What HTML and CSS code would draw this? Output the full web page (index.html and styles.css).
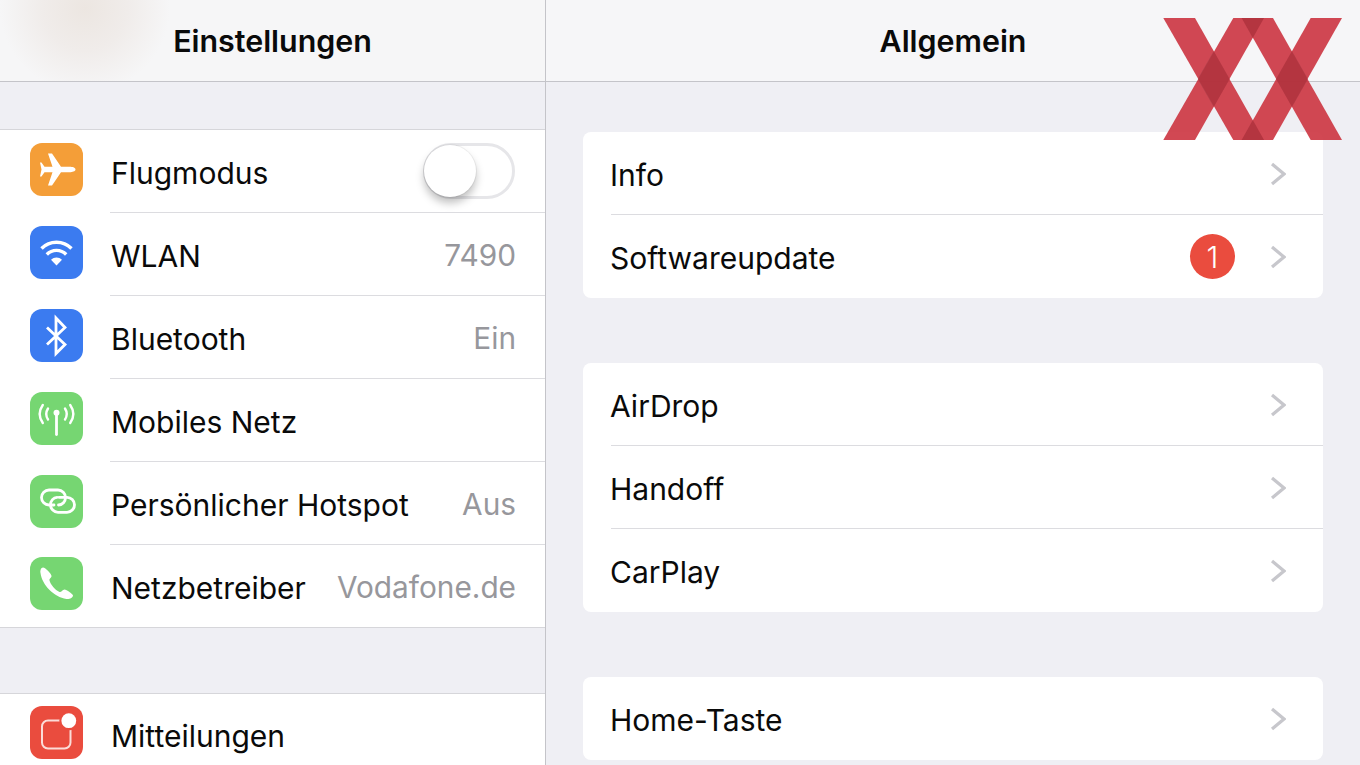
FILE: index.html
```html
<!DOCTYPE html>
<html lang="de">
<head>
<meta charset="utf-8">
<title>Einstellungen</title>
<link rel="stylesheet" href="styles.css">
</head>
<body>
<div class="app">
  <aside class="master">
    <header class="nav nav-master"><h1>Einstellungen</h1></header>
    <ul class="group group-first">
      <li class="mrow"><svg class="ico orange" viewBox="0 0 53 53"><path fill="#fff" d="M45.5 26.5C45.5 24.5 42 23.8 40 23.8L31 23.8L22 10.5L18 10.5L22.5 23.8L14.5 23.8L11.5 19.5L10 19.5L11.5 26.5L10 33.5L11.5 33.5L14.5 29.2L22.5 29.2L18 42.5L22 42.5L31 29.2L40 29.2C42 29.2 45.5 28.5 45.5 26.5Z"/></svg>
        <div class="mbody"><span class="label">Flugmodus</span><span class="toggle"><span class="knob"></span></span></div></li>
      <li class="mrow"><svg class="ico blue" viewBox="0 0 53 53"><g fill="none" stroke="#fff" stroke-width="3.4"><path d="M11.5 22.5A21 21 0 0 1 41.5 22.5"/><path d="M16.8 28.5A13.5 13.5 0 0 1 36.2 28.5"/></g><path fill="#fff" d="M26.5 39.5L21 33.8A8 8 0 0 1 32 33.8Z"/></svg>
        <div class="mbody"><span class="label">WLAN</span><span class="value">7490</span></div></li>
      <li class="mrow"><svg class="ico blue" viewBox="0 0 53 53"><path fill="none" stroke="#fff" stroke-width="2.8" d="M17 18.5L35 35.5L26 44.5V9L35 18.5L17 35.5"/></svg>
        <div class="mbody"><span class="label">Bluetooth</span><span class="value">Ein</span></div></li>
      <li class="mrow"><svg class="ico green" viewBox="0 0 53 53"><g fill="none" stroke="#fff" stroke-width="2.4" stroke-linecap="round"><path d="M26.5 21V42.5" stroke-width="2.8"/><path d="M12.8 13Q6.5 22 12.8 31"/><path d="M40.2 13Q46.5 22 40.2 31"/><path d="M18 16.5Q14.5 22 18 27.5"/><path d="M35 16.5Q38.5 22 35 27.5"/></g><circle cx="26.5" cy="20.7" r="3" fill="#fff"/></svg>
        <div class="mbody"><span class="label">Mobiles Netz</span></div></li>
      <li class="mrow"><svg class="ico green" viewBox="0 0 53 53"><g fill="none" stroke="#fff" stroke-width="2.8" stroke-linecap="round"><path d="M24 30H19A7.5 7.5 0 0 1 19 15H28A7.5 7.5 0 0 1 35.5 22.5C35.5 26.5 32.5 30 28.5 30"/><path d="M29 22.3H37A7.5 7.5 0 0 1 37 37.3H28A7.5 7.5 0 0 1 20.5 29.8C20.5 25.8 23.5 22.3 27 22.3"/></g></svg>
        <div class="mbody"><span class="label">Persönlicher Hotspot</span><span class="value">Aus</span></div></li>
      <li class="mrow"><svg class="ico green" viewBox="0 0 53 53"><path fill="#fff" d="M13 10.5C11 10.5 10 13.5 10.5 16C12 28 24 40 36.5 42C39.5 42.5 43 40.5 43 38.5C43 37 36.5 32.5 34.5 32.5C32.5 32.5 31.5 35.5 29.5 35C25 33 20.5 27.5 19.5 23.5C19 21.5 21.5 21 21.5 19C21.5 17 15.5 10.5 13 10.5Z"/></svg>
        <div class="mbody"><span class="label">Netzbetreiber</span><span class="value">Vodafone.de</span></div></li>
    </ul>
    <ul class="group group-next">
      <li class="mrow"><svg class="ico red" viewBox="0 0 53 53"><rect x="12" y="14.5" width="28.5" height="28" rx="6" fill="none" stroke="#fbdcd8" stroke-width="2"/><circle cx="38.8" cy="14.7" r="9.5" fill="#ea4c3e"/><circle cx="38.8" cy="14.7" r="7.4" fill="#fff"/></svg>
        <div class="mbody"><span class="label">Mitteilungen</span></div></li>
    </ul>
  </aside>
  <main class="detail">
    <header class="nav"><h1>Allgemein</h1></header>
    <div class="cards">
      <ul class="card">
        <li class="drow"><span class="label">Info</span><svg class="chev" viewBox="0 0 16 24"><path d="M2 2L14 12L2 22"/></svg></li>
        <li class="drow"><span class="label">Softwareupdate</span><span class="badge">1</span><svg class="chev" viewBox="0 0 16 24"><path d="M2 2L14 12L2 22"/></svg></li>
      </ul>
      <ul class="card">
        <li class="drow"><span class="label">AirDrop</span><svg class="chev" viewBox="0 0 16 24"><path d="M2 2L14 12L2 22"/></svg></li>
        <li class="drow"><span class="label">Handoff</span><svg class="chev" viewBox="0 0 16 24"><path d="M2 2L14 12L2 22"/></svg></li>
        <li class="drow"><span class="label">CarPlay</span><svg class="chev" viewBox="0 0 16 24"><path d="M2 2L14 12L2 22"/></svg></li>
      </ul>
      <ul class="card">
        <li class="drow"><span class="label">Home-Taste</span><svg class="chev" viewBox="0 0 16 24"><path d="M2 2L14 12L2 22"/></svg></li>
      </ul>
    </div>
  </main>
</div>
<svg class="mark" viewBox="0 0 180 122" aria-hidden="true">
  <g class="bars">
    <polygon points="0.3,0 32,0 101,122 70.3,122"/>
    <polygon points="70.3,0 101,0 32,122 0.3,122"/>
    <polygon points="78.7,0 110,0 179,122 147.7,122"/>
    <polygon points="147.7,0 179,0 110,122 78.7,122"/>
  </g>
  <g class="cross">
    <polygon points="50.7,33 66.7,61 50.7,89 34.7,61"/>
    <polygon points="129,33 145,61 129,89 113,61"/>
    <polygon points="78.7,0 101,0 89.8,20"/>
    <polygon points="78.7,122 101,122 89.8,102"/>
  </g>
</svg>
</body>
</html>
```
FILE: styles.css
```css
* { box-sizing: border-box; }
html, body { margin: 0; height: 765px; overflow: hidden; }
body { font-family: Inter, "Liberation Sans", sans-serif; background: #efeff4; color: #0a0a0a; }
ul { list-style: none; margin: 0; padding: 0; }
.app { display: flex; height: 765px; overflow: hidden; }
.master { width: 546px; flex: none; border-right: 1px solid #c4c4c9; }
.detail { flex: 1; min-width: 0; }
.nav { height: 82px; padding-top: 2px; border-bottom: 1px solid #c4c4c9; background: #f6f6f8; display: flex; align-items: center; justify-content: center; }
.nav-master { background: radial-gradient(ellipse 85px 85px at 85px 8px, #ece6e1 0%, #f0ecea 50%, #f6f6f7 100%), #f6f6f7; }
.nav h1 { margin: 0; font-size: 30.4px; font-weight: 600; line-height: 1; }
.group { background: #fff; border-top: 1px solid #d6d6da; border-bottom: 1px solid #d6d6da; }
.group-first { margin-top: 47px; }
.group-next { margin-top: 65px; border-bottom: 0; }
.mrow { display: flex; height: 83px; padding-left: 29.5px; align-items: center; }
.mrow:last-child { height: 82px; }
.ico { width: 53px; height: 53px; flex: none; border-radius: 12px; margin: 0 27.5px 5px 0; }
.orange { background: #f49e38; }
.blue { background: #3b7bf0; }
.green { background: #76d672; }
.red { background: #ea4c3e; }
.mbody { flex: 1; min-width: 0; height: 100%; padding: 3px 30px 0 1px; display: flex; align-items: center; justify-content: space-between; border-bottom: 1px solid #dcdce0; }
.mrow:last-child .mbody { border-bottom: 0; }
.group-next .mbody { padding-top: 1px; }
.label { font-size: 30px; line-height: 1; font-weight: 400; }
.value { font-size: 29.8px; line-height: 1; color: #97979c; margin: 1px -1px 0 0; }
.toggle { width: 92px; height: 56px; margin-top: -3px; border: 3px solid #e6e6e9; border-radius: 28px; background: #fff; display: block; }
.knob { display: block; width: 52px; height: 52px; margin: -1px 0 0 -2px; border-radius: 50%; background: #fff; box-shadow: 0 0 0 1px rgba(0,0,0,.05), 0 6px 8px rgba(0,0,0,.25); }
.cards { padding: 50px 37px 0; display: flex; flex-direction: column; gap: 65px; }
.card { background: #fff; border-radius: 8px; overflow: hidden; }
.drow { height: 83px; display: flex; align-items: center; padding: 0 37px 0 27px; position: relative; }
.drow .label { flex: 1; margin-top: 2px; }
.card .drow:not(:last-child)::after { content: ""; position: absolute; left: 28px; right: 0; bottom: 0; height: 1px; background: #dcdce0; }
.chev { width: 16px; height: 24px; flex: none; }
.chev path { fill: none; stroke: #c7c7cc; stroke-width: 3.2; }
.badge { width: 45px; height: 45px; margin-right: 35px; border-radius: 50%; background: #ea4c3e; color: #fff; font-size: 30px; font-weight: 300; display: flex; align-items: center; justify-content: center; }
.mark { position: absolute; left: 1163px; top: 18px; width: 180px; height: 122px; }
.bars polygon { fill: rgba(204,52,64,.9); }
.cross polygon { fill: rgba(90,50,60,.22); }
```
